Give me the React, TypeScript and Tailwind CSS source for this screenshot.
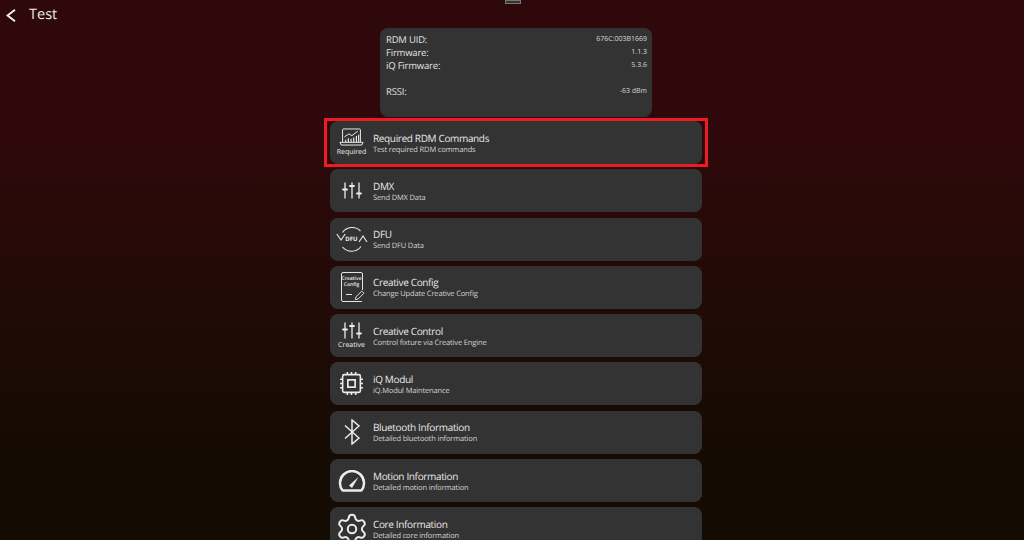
import { Settings } from "lucide-react";
import type { ReactNode } from "react";

function SlidersIcon({ className }: { className: string }) {
  return (
    <svg viewBox="0 0 20 17" className={className} fill="none" stroke="currentColor" strokeWidth="1.300" strokeLinecap="round">
      <path d="M3 1v15M10 1v15M17 1v15" />
      <path d="M1 7.500h4M8 4h4M15 11.500h4" strokeWidth="1.800" />
    </svg>
  );
}

function RequiredIcon() {
  return (
    <svg viewBox="0 0 28 20" className="h-[18px] w-[25px]" fill="none" stroke="currentColor" strokeWidth="1.100">
      <path d="M4 15.500V2a1 1 0 0 1 1-1h18a1 1 0 0 1 1 1v13.500" />
      <path d="M1 16h26l-1.500 3h-23z" />
      <path d="M6 10l5-3.500 3.500 2L21 3.500" />
      <path d="M7.500 15.500v-2.500M10.500 15.500v-4M13.500 15.500v-3.500M16.500 15.500v-5M19.500 15.500v-6.500M22 15.500v-8" strokeWidth="1.300" />
    </svg>
  );
}

function DfuIcon() {
  return (
    <div className="relative flex h-[26px] w-[32px] items-center justify-center">
      <svg viewBox="0 0 32 26" className="absolute inset-0 h-full w-full" fill="none" stroke="currentColor" strokeWidth="1.100">
        <path d="M6.500 6.500A11.800 11.800 0 0 1 24.500 5" />
        <path d="M25 20.500A11.800 11.800 0 0 1 6.500 21" />
        <path d="M.8 8l4.200 6L9.200 8" />
        <path d="M23 16l4-6 4 6" />
      </svg>
      <span className="text-[6px] font-bold leading-none">DFU</span>
    </div>
  );
}

function ConfigIcon() {
  return (
    <div className="relative h-[30px] w-[22px] rounded-[2px] border border-[#e4e4e4] pt-[3px] text-center text-[5px] font-semibold leading-[6px]">
      <div>Creative</div>
      <div>Config</div>
      <div className="absolute bottom-[6px] left-[4px] h-px w-[6px] bg-[#e4e4e4]" />
      <svg viewBox="0 0 12 12" className="absolute -right-[3px] bottom-0 h-[11px] w-[11px] bg-[#333333]" fill="none" stroke="currentColor" strokeWidth="1">
        <path d="M1.500 10.500l.6-3L8.500 1.200l2.300 2.300-6.400 6.400z" />
      </svg>
    </div>
  );
}

function ChipIcon() {
  return (
    <svg viewBox="0 0 24 24" className="h-[25px] w-[25px]" fill="none" stroke="currentColor" strokeWidth="1.500">
      <rect x="3.500" y="3.500" width="17" height="17" rx="1.500" />
      <rect x="8.500" y="8.500" width="7" height="7" strokeWidth="1.600" />
      <path d="M8 1v2.500M12 1v2.500M16 1v2.500M8 20.500V23M12 20.500V23M16 20.500V23M1 8h2.500M1 12h2.500M1 16h2.500M20.500 8H23M20.500 12H23M20.500 16H23" />
    </svg>
  );
}

function BluetoothIcon() {
  return (
    <svg viewBox="0 0 16 26" className="h-[26px] w-[16px]" fill="none" stroke="currentColor" strokeWidth="1.500">
      <path d="M1 6.500L15 19l-7 6V1l7 6L1 19.500" />
    </svg>
  );
}

function GaugeIcon() {
  return (
    <svg viewBox="0 0 28 22" className="h-[22px] w-[28px]" fill="none" stroke="currentColor">
      <path d="M4.600 20.500A12 12 0 1 1 23.400 20.500z" strokeWidth="2.500" strokeLinejoin="round" />
      <path d="M11 15.500L20.500 7 14 18z" fill="currentColor" stroke="none" />
    </svg>
  );
}

const items: { title: string; sub: string; icon: ReactNode }[] = [
  {
    title: "Required RDM Commands",
    sub: "Test required RDM commands",
    icon: (
      <div className="flex flex-col items-center">
        <RequiredIcon />
        <span className="mt-[2px] text-[7px] leading-[9px]">Required</span>
      </div>
    ),
  },
  { title: "DMX", sub: "Send DMX Data", icon: <SlidersIcon className="h-[17px] w-[20px]" /> },
  { title: "DFU", sub: "Send DFU Data", icon: <DfuIcon /> },
  { title: "Creative Config", sub: "Change Update Creative Config", icon: <ConfigIcon /> },
  {
    title: "Creative Control",
    sub: "Control fixture via Creative Engine",
    icon: (
      <div className="flex flex-col items-center">
        <SlidersIcon className="h-[17px] w-[20px]" />
        <span className="mt-[2px] text-[7px] leading-[9px]">Creative</span>
      </div>
    ),
  },
  { title: "iQ Modul", sub: "iQ.Modul Maintenance", icon: <ChipIcon /> },
  { title: "Bluetooth Information", sub: "Detailed bluetooth information", icon: <BluetoothIcon /> },
  { title: "Motion Information", sub: "Detailed motion information", icon: <GaugeIcon /> },
  { title: "Core Information", sub: "Detailed core information", icon: <Settings size={34} strokeWidth={1.400} /> },
];

const info = [
  ["RDM UID:", "676C:003B1669"],
  ["Firmware:", "1.1.3"],
  ["iQ Firmware:", "5.3.6"],
  ["", ""],
  ["RSSI:", "-63 dBm"],
];

function MenuCard({ title, sub, icon, selected }: { title: string; sub: string; icon: ReactNode; selected?: boolean }) {
  return (
    <div className={selected ? "-mx-[6px] -my-[3px] border-[3px] border-[#ed1c24] px-[3px]" : ""}>
      <div className="flex h-[43px] w-[372px] shrink-0 items-center rounded-[8px] bg-[#333333] text-[#ececec]">
        <div className="flex w-[43px] shrink-0 items-center justify-center">{icon}</div>
        <div className="pt-[1px]">
          <div className="text-[10px] leading-[13px] tracking-[-0.35px] text-[#e8e8e8]">{title}</div>
          <div className="text-[7.5px] leading-[10px] tracking-[-0.15px] text-[#d4d4d4]">{sub}</div>
        </div>
      </div>
    </div>
  );
}

export default function App() {
  return (
    <div
      className="relative h-[540px] w-[1024px] overflow-hidden bg-gradient-to-b from-[#2f080b] from-25% to-[#140b03] to-85% text-white [text-rendering:geometricPrecision]"
      style={{ fontFamily: '"Open Sans", "Noto Sans", sans-serif' }}
    >
      <div className="absolute left-[505px] top-0 h-[4px] w-[16px] border border-[#777777] bg-[#333333]" />
      <header className="flex h-[30px] items-center pl-[6px]">
        <svg viewBox="0 0 10 13" className="h-[13px] w-[10px] text-[#f0f0f0]" fill="none" stroke="currentColor" strokeWidth="2">
          <path d="M9 .8L1.500 6.500 9 12.200" />
        </svg>
        <span className="ml-[13px] text-[14.5px] leading-none text-[#e8e8e8]">Test</span>
      </header>
      <main className="-mt-[2px] flex flex-col items-center pl-[8px]">
        <section className="mb-[4px] h-[89px] w-[272px] rounded-[8px] bg-[#333333] pl-[6px] pr-[5px] pt-[5px]">
          {info.map(([label, value], i) => (
            <div key={i} className="flex h-[13px] items-start justify-between">
              <span className="text-[9.5px] leading-[13px] tracking-[-0.2px] text-[#e2e2e2]">{label}</span>
              <span className="text-[7px] leading-[14px] text-[#d8d8d8]">{value}</span>
            </div>
          ))}
        </section>
        <div className="flex flex-col gap-[5.3px]">
          {items.map((item, i) => (
            <MenuCard key={item.title} {...item} selected={i === 0} />
          ))}
        </div>
      </main>
    </div>
  );
}
